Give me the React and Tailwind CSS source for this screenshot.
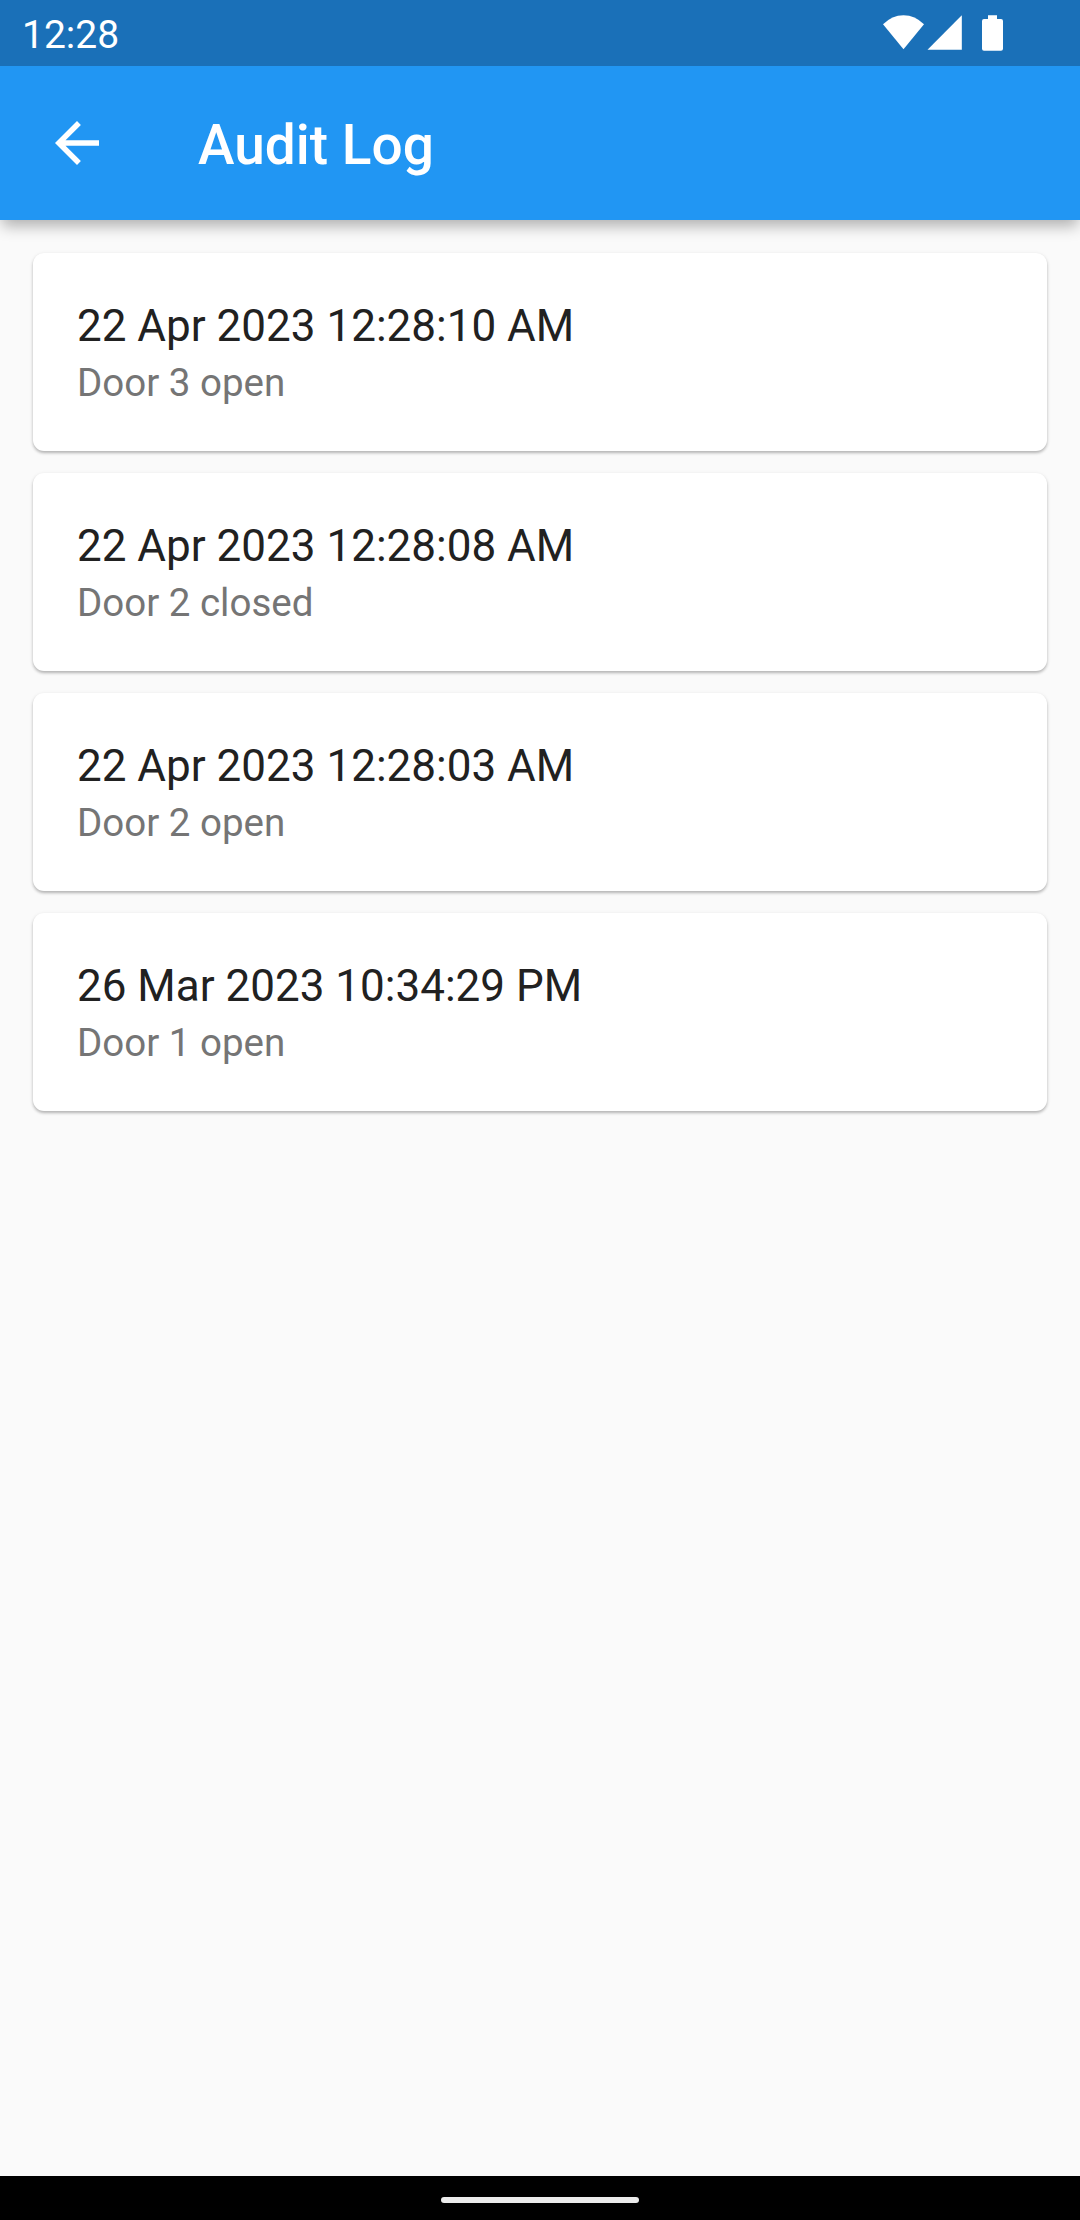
const entries = [
  { time: "22 Apr 2023 12:28:10 AM", event: "Door 3 open" },
  { time: "22 Apr 2023 12:28:08 AM", event: "Door 2 closed" },
  { time: "22 Apr 2023 12:28:03 AM", event: "Door 2 open" },
  { time: "26 Mar 2023 10:34:29 PM", event: "Door 1 open" },
];

function StatusBar() {
  return (
    <div className="relative z-10 flex h-[66px] items-start justify-between bg-[#1a70b8] pl-[22px] text-white">
      <span className="mt-3 text-[39px] leading-[46px]">12:28</span>
      <div className="mr-[77px] flex pt-[15px]">
        <svg className="h-[37px] w-[41px]" viewBox="0 0 41 37" fill="currentColor">
          <path d="M0 9.3Q9 0.2 20.5 0.2T41 9.3L20.5 34.3Z" />
        </svg>
        <svg className="ml-[3px] h-[37px] w-[35px]" viewBox="0 0 35 37" fill="currentColor">
          <path d="M0.5 34.7L34.8 0.2V34.7Z" />
        </svg>
        <svg className="ml-5 h-[37px] w-[21px]" viewBox="0 0 21 37" fill="currentColor">
          <path d="M6 0.2H15V4H19Q21 4 21 6V33.7Q21 35.7 19 35.7H2Q0 35.7 0 33.7V6Q0 4 2 4H6Z" />
        </svg>
      </div>
    </div>
  );
}

function AppBar() {
  return (
    <header className="flex h-[154px] items-center bg-[#2196f3] pl-11 text-white shadow-[0_8px_14px_-2px_rgba(0,0,0,0.3)]">
      <button aria-label="Back" className="size-[66px]">
        <svg className="size-[66px]" viewBox="0 0 24 24" fill="currentColor">
          <path d="M20 11H7.83l5.59-5.59L12 4l-8 8 8 8 1.41-1.41L7.83 13H20v-2z" />
        </svg>
      </button>
      <h1 className="mt-1 ml-[88px] text-[55px] leading-[64px] font-medium">Audit Log</h1>
    </header>
  );
}

function LogCard({ time, event }) {
  return (
    <li className="flex h-[198px] flex-col rounded-[11px] bg-white px-11 pt-[47px] shadow-[0_2px_3px_0_rgba(0,0,0,0.25),0_1px_5px_0_rgba(0,0,0,0.06)]">
      <p className="text-[44px] leading-[52px] text-[#212121]">{time}</p>
      <p className="mt-2 text-[38.5px] leading-[46px] text-[#757575]">{event}</p>
    </li>
  );
}

export default function App() {
  return (
    <div className="flex h-[2220px] w-[1080px] flex-col overflow-hidden bg-[#fafafa] font-['Roboto',sans-serif]">
      <StatusBar />
      <AppBar />
      <main className="flex-1 px-[33px] pt-[33px]">
        <ul className="flex flex-col gap-[22px]">
          {entries.map((entry) => (
            <LogCard key={entry.time} {...entry} />
          ))}
        </ul>
      </main>
      <div className="flex h-11 justify-center bg-black pt-[21px]">
        <div className="h-1.5 w-[198px] rounded-full bg-[#ebebeb]" />
      </div>
    </div>
  );
}
